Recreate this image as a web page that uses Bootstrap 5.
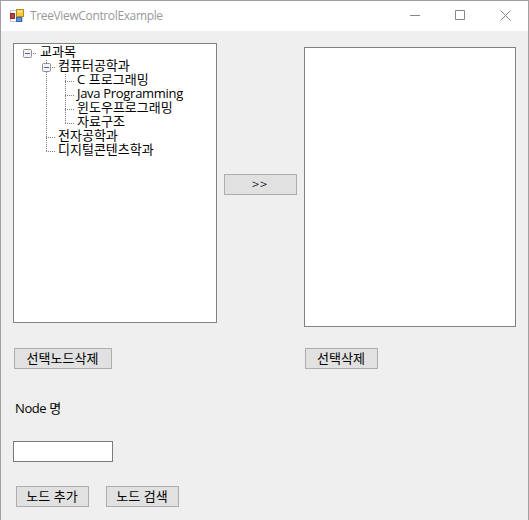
<!DOCTYPE html>
<html lang="ko">
<head>
<meta charset="utf-8">
<meta name="viewport" content="width=device-width, initial-scale=1">
<title>TreeViewControlExample</title>
<link href="https://cdn.jsdelivr.net/npm/bootstrap@5.3.0/dist/css/bootstrap.min.css" rel="stylesheet">
<style>
body{font:400 13px/14px "Noto Sans CJK KR",sans-serif;color:#000;background:#efefef}
.win{height:520px;border:1px solid #a0a0a0;border-bottom:0;background:#efefef}
.titlebar{height:30px;background:#fff;padding-left:9px}
.caption{font:12px/28px "Open Sans","Noto Sans",sans-serif;color:#999;margin-left:6px;letter-spacing:-.36px}
.caps{gap:34px;padding-right:17px;padding-bottom:2px}
.lists{padding:12px 12px 0 12px;height:296px}
.pane{background:#fff;border:1px solid #828282;height:280px}
.pane-tree{width:204px;padding-top:2px}
.pane-out{width:212px;margin-top:4px}
.wbtn{--bs-btn-padding-x:0;--bs-btn-padding-y:0;--bs-btn-font-size:13px;--bs-btn-line-height:17px;--bs-btn-border-radius:0;--bs-btn-color:#000;--bs-btn-bg:#e1e1e1;--bs-btn-border-color:#adadad;--bs-btn-hover-bg:#e5f1fb;--bs-btn-hover-border-color:#0078d7;width:73px;height:21px;padding:0 1px 3px 0;font-family:"Noto Sans CJK KR",sans-serif}
.wbtn-wide{width:98px}
.move{margin:131px 7px 0;letter-spacing:1px;font-weight:300}
.actions{padding:21px 0 0 13px}
.actions .wbtn-wide{margin-right:193px}
.node-label{padding:32px 0 0 14px;height:72px}
.node-input{width:100px;height:21px;margin-left:12px;border:1px solid #7a7a7a;border-radius:0;padding:0 3px;font-size:13px}
.node-actions{padding:24px 0 0 15px;gap:17px}
.tree-row{height:14px;white-space:nowrap}
.tree-row span{line-height:14px;margin-top:-2px}
.tree-row svg{flex:none}
.latin{font-family:"Open Sans","Noto Sans CJK KR",sans-serif;letter-spacing:-.3px}
.mixed{letter-spacing:.05px}
.node-label.latin{letter-spacing:-.4px}
.dots{stroke:#808080;stroke-width:1;stroke-dasharray:1 1;fill:none}
</style>
<script src="https://cdn.jsdelivr.net/npm/bootstrap@5.3.0/dist/js/bootstrap.bundle.min.js"></script>
</head>
<body class="overflow-hidden">
<svg class="d-none">
  <defs>
    <g id="minus"><rect x=".5" y=".5" width="8" height="8" rx="1" fill="#f3f3f3" stroke="#919191"/><path d="M2 4.500h5" stroke="#4b63a7"/></g>
  </defs>
</svg>
<main class="win d-flex flex-column">
  <header class="titlebar d-flex align-items-center flex-shrink-0">
    <svg width="14" height="14" viewBox="0 0 14 14">
      <rect x=".5" y="1.5" width="12" height="11" fill="#fff" stroke="#c9c9c9"/>
      <rect x="6.5" y=".5" width="7" height="7" fill="#f8c83c" stroke="#b78a22"/>
      <path d="M7.5 1.500h5v2h-5z" fill="#fde58b"/>
      <rect x=".5" y="4.500" width="4" height="5" fill="#c63c30" stroke="#8c2c28"/>
      <rect x="6.500" y="8.500" width="5" height="4" fill="#5b93e0" stroke="#3b69b0"/>
    </svg>
    <span class="caption">TreeViewControlExample</span>
    <div class="caps d-flex align-items-center ms-auto">
      <svg width="11" height="11"><path d="M0 5.500h10" stroke="#858585"/></svg>
      <svg width="11" height="11"><path d="M.5.5h9v9h-9z" fill="none" stroke="#858585"/></svg>
      <svg width="11" height="11"><path d="M.5.5l10 10M10.500.5l-10 10" stroke="#858585"/></svg>
    </div>
  </header>
  <section class="lists d-flex align-items-start flex-shrink-0">
    <div class="pane pane-tree">
      <div class="tree-row d-flex"><svg width="26" height="14"><use href="#minus" x="9" y="3"/><path class="dots" d="M19 7.500h4"/></svg><span>교과목</span></div>
      <div class="tree-row d-flex"><svg width="44" height="14"><path class="dots" d="M32.500 0v3M32.500 12v2M38 7.500h4"/><use href="#minus" x="28" y="3"/></svg><span>컴퓨터공학과</span></div>
      <div class="tree-row d-flex"><svg width="63" height="14"><path class="dots" d="M32.500 0v14M51.500 0v14M51 7.500h10"/></svg><span class="latin mixed">C 프로그래밍</span></div>
      <div class="tree-row d-flex"><svg width="63" height="14"><path class="dots" d="M32.500 0v14M51.500 0v14M51 7.500h10"/></svg><span class="latin">Java Programming</span></div>
      <div class="tree-row d-flex"><svg width="63" height="14"><path class="dots" d="M32.500 0v14M51.500 0v14M51 7.500h10"/></svg><span>윈도우프로그래밍</span></div>
      <div class="tree-row d-flex"><svg width="63" height="14"><path class="dots" d="M32.500 0v14M51.500 0v8M51 7.500h10"/></svg><span>자료구조</span></div>
      <div class="tree-row d-flex"><svg width="44" height="14"><path class="dots" d="M32.500 0v14M32 7.500h10"/></svg><span>전자공학과</span></div>
      <div class="tree-row d-flex"><svg width="44" height="14"><path class="dots" d="M32.500 0v8M32 7.500h10"/></svg><span>디지털콘텐츠학과</span></div>
    </div>
    <button type="button" class="btn wbtn move">&gt;&gt;</button>
    <div class="pane pane-out"></div>
  </section>
  <div class="actions d-flex">
    <button type="button" class="btn wbtn wbtn-wide">선택노드삭제</button>
    <button type="button" class="btn wbtn">선택삭제</button>
  </div>
  <label class="node-label latin" for="node">Node 명</label>
  <input id="node" class="form-control node-input" type="text">
  <div class="node-actions d-flex">
    <button type="button" class="btn wbtn">노드 추가</button>
    <button type="button" class="btn wbtn">노드 검색</button>
  </div>
</main>
</body>
</html>
